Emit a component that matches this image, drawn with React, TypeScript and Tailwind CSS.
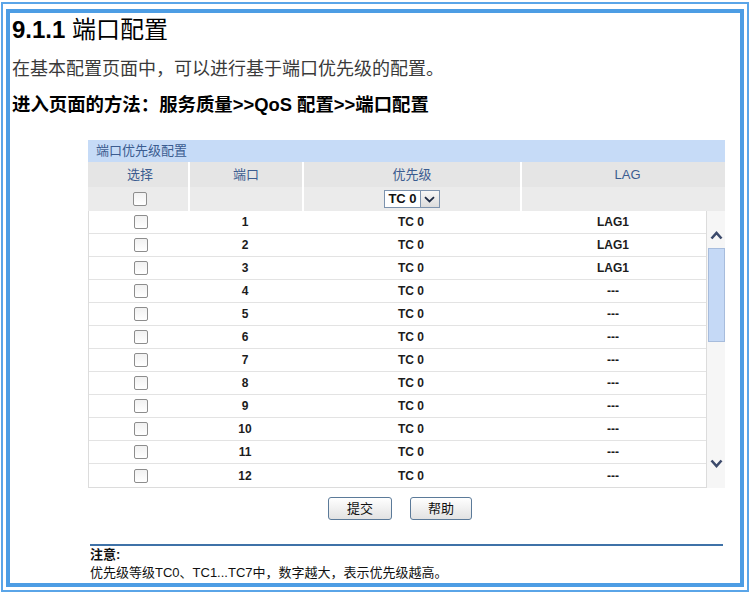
import React from "react";

const rows = Array.from({ length: 12 }, (_, i) => ({
  port: i + 1,
  prio: "TC 0",
  lag: i < 3 ? "LAG1" : "---",
}));

function Checkbox() {
  return (
    <span className="inline-block h-[14px] w-[14px] rounded-[2px] border border-[#8d8d8d] bg-linear-to-b from-[#f1f1f1] to-white" />
  );
}

function Chevron({ up }: { up?: boolean }) {
  return (
    <svg width="13" height="9" viewBox="0 0 13 9">
      <polyline
        points={up ? "1.5,7.5 6.5,2 11.5,7.5" : "1.5,1.5 6.5,7 11.5,1.5"}
        fill="none"
        stroke="#3c4a6b"
        strokeWidth="2.6"
      />
    </svg>
  );
}

export default function App() {
  return (
    <div className="h-[593px] w-[750px] bg-white pt-[2px] pr-px pb-px pl-px font-['Liberation_Sans','Noto_Sans_CJK_SC',sans-serif]">
      <div className="h-full border-2 border-[#5aa5e8] p-[3px] pt-[5px]">
        <div className="flex h-full flex-col border-4 border-[#4d9de4] bg-white pl-[2px]">
          <h1 className="h-[34px] text-[24px] leading-[34px] text-black">
            <span className="font-bold">9.1.1</span> 端口配置
          </h1>
          <p className="mt-[8px] h-[28px] text-[18px] leading-[28px] text-[#3a3a3a]">
            在基本配置页面中，可以进行基于端口优先级的配置。
          </p>
          <p className="mt-[8px] h-[28px] text-[18.4px] leading-[28px] font-bold text-black">
            进入页面的方法：服务质量&gt;&gt;QoS 配置&gt;&gt;端口配置
          </p>

          {/* panel */}
          <div className="mt-[21px] ml-[76px] w-[637px]">
            <div className="h-[22px] bg-[#c6dbf7] pl-[8px] text-[13px] leading-[22px] text-[#3b5c90]">
              端口优先级配置
            </div>
            <div className="grid h-[25px] grid-cols-[100px_114px_218px_205px] bg-[#e5e5e5] text-[13px] leading-[25px] text-[#3b5c90]">
              <div className="pl-[4px] text-center">选择</div>
              <div className="border-l-2 border-white text-center">端口</div>
              <div className="border-l-2 border-white text-center">优先级</div>
              <div className="border-l-2 border-white pl-[8px] text-center">LAG</div>
            </div>
            <div className="grid h-[24px] grid-cols-[100px_114px_218px_205px] bg-[#ebebeb] text-[12px]">
              <div className="flex items-center justify-center pl-[4px]">
                <Checkbox />
              </div>
              <div className="border-l-2 border-white" />
              <div className="flex items-center justify-center border-l-2 border-white">
                <div className="flex h-[18px] items-center border border-[#7d93ae] bg-white">
                  <span className="px-[3px] text-[13px] leading-[16px] font-bold text-[#111]">TC 0</span>
                  <span className="flex h-[16px] w-[19px] items-center justify-center border-l border-[#7d93ae] bg-linear-to-b from-[#f7f7f7] to-[#dcdcdc]">
                    <svg width="11" height="7" viewBox="0 0 11 7">
                      <polyline points="1,1.2 5.5,5.5 10,1.2" fill="none" stroke="#1d2a44" strokeWidth="1.8" />
                    </svg>
                  </span>
                </div>
              </div>
              <div className="border-l-2 border-white" />
            </div>

            <div className="flex">
              <div className="w-[619px] border-x border-b border-[#dcdcdc]">
                {rows.map((r) => (
                  <div
                    key={r.port}
                    className="grid h-[23px] grid-cols-[99px_114px_218px_1fr] items-center border-b border-[#e3e3e3] text-[12px] font-bold text-[#1c1c1c] last:border-b-0"
                  >
                    <div className="flex justify-center pl-[4px]">
                      <Checkbox />
                    </div>
                    <div className="text-center">{r.port}</div>
                    <div className="text-center">{r.prio}</div>
                    <div className="text-center">{r.lag}</div>
                  </div>
                ))}
              </div>
              <div className="flex w-[18px] flex-col items-center bg-[#f6f6f6]">
                <div className="mt-[19px] flex h-[10px] items-center">
                  <Chevron up />
                </div>
                <div className="mt-[8px] h-[94px] w-[17px] border border-[#a7bcdc] bg-[#c5d9f6]" />
                <div className="mt-[116px] flex h-[10px] items-center">
                  <Chevron />
                </div>
              </div>
            </div>

            <div className="mt-[9px] flex gap-[18px] pl-[240px]">
              <button className="h-[23px] w-[64px] rounded-[3px] border border-[#5b7a99] bg-linear-to-b from-white to-[#e2e2e2] text-[13px] text-[#111]">
                提交
              </button>
              <button className="h-[23px] w-[62px] rounded-[3px] border border-[#5b7a99] bg-linear-to-b from-white to-[#e2e2e2] text-[13px] text-[#111]">
                帮助
              </button>
            </div>
          </div>

          <div className="mt-[24px] ml-[78px] h-[2px] w-[633px] bg-[#3f72a8]" />
          <div className="ml-[78px] text-[13px] leading-[18px] text-[#111]">
            <div className="font-bold">注意:</div>
            <div>优先级等级TC0、TC1...TC7中，数字越大，表示优先级越高。</div>
          </div>
        </div>
      </div>
    </div>
  );
}
